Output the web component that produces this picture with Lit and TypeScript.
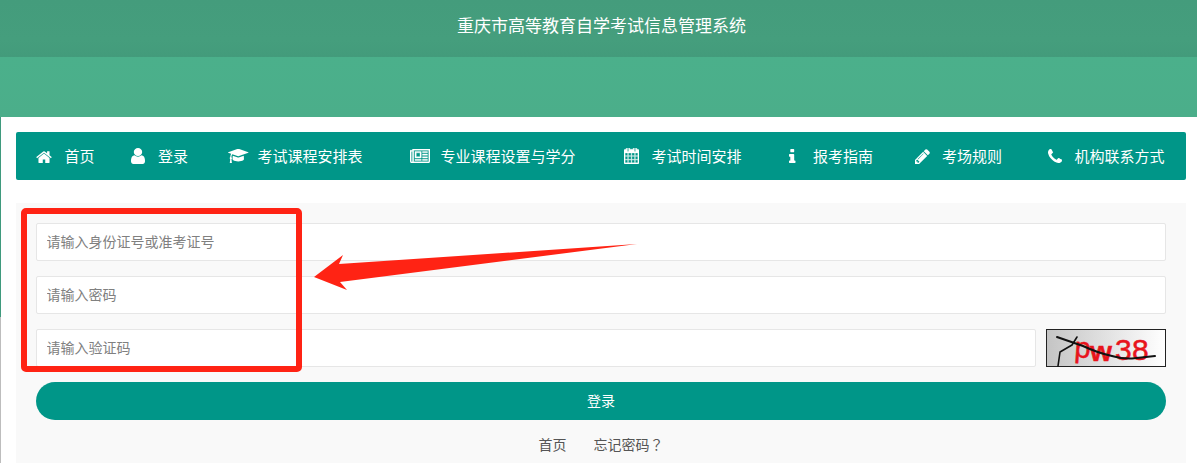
import { LitElement, html, css, svg } from "lit";
import { customElement } from "lit/decorators.js";

const ICONS: Record<string, { vb: string; d: string; rule?: string; bold?: boolean }> = {
  home: { vb: "64 128 1664 1408", d: "M1472 992v480q0 26-19 45t-45 19h-384v-384h-256v384h-384q-26 0-45-19t-19-45v-480q0-1 .5-3t.5-3l575-474 575 474q1 2 1 6zm223-69l-62 74q-8 9-21 11h-3q-13 0-21-7l-692-577-692 577q-12 8-24 7-13-2-21-11l-62-74q-8-10-7-23.500t11-21.500l719-599q32-26 76-26t76 26l244 204v-195q0-14 9-23t23-9h192q14 0 23 9t9 23v408l219 182q10 8 11 21.500t-7 23.500z" },
  user: { vb: "256 128 1280 1536", d: "M1536 1399q0 109-62.500 187t-150.500 78h-854q-88 0-150.500-78t-62.500-187q0-85 8.500-160.500t31.500-152 58.500-131 94-89 134.500-34.500q131 128 313 128t313-128q76 0 134.500 34.500t94 89 58.500 131 31.500 152 8.500 160.500zm-256-887q0 159-112.500 271.500t-271.500 112.500-271.500-112.500-112.500-271.500 112.500-271.500 271.500-112.500 271.500 112.500 112.500 271.500z" },
  cap: { vb: "0 160 2304 1408", d: "M1774 836l18 316q4 69-82 128t-235 93.500-323 34.500-323-34.500-235-93.500-82-128l18-316 574 181q22 7 48 7t48-7zm530-324q0 23-22 31l-1120 352q-4 1-10 1t-10-1l-652-206q-43 34-71 111.500t-34 178.500q63 36 63 109 0 69-58 107l58 433q2 14-8 25-9 11-24 11h-192q-15 0-24-11-10-11-8-25l58-433q-58-38-58-107 0-73 65-111 11-207 98-330l-333-104q-22-8-22-31t22-31l1120-352q4-1 10-1t10 1l1120 352q22 8 22 31z" },
  news: { vb: "0 256 2048 1408", rule: "evenodd", bold: true, d: "M256 256h1792v1216q0 80-56 136t-136 56H192q-80 0-136-56T0 1472V384h256zM384 384v1088q0 30-11 64h1483q26 0 45-19t19-45V384zM128 512v960q0 26 19 45t45 19 45-19 19-45V512zM512 512h640v640H512zM640 640v384h384V640zM1280 512h512v128h-512zM1280 768h512v128h-512zM1280 1024h512v128h-512zM1280 1280h512v128h-512zM512 1280h640v128H512z" },
  calendar: { vb: "0 128 1664 1664", bold: true, d: "M128 1664h288v-288h-288v288zm352 0h320v-288h-320v288zm-352-352h288v-320h-288v320zm352 0h320v-320h-320v320zm-352-384h288v-288h-288v288zm736 736h320v-288h-320v288zm-384-736h320v-288h-320v288zm768 736h288v-288h-288v288zm-384-352h320v-320h-320v320zm-352-864v-288q0-13-9.500-22.500t-22.500-9.500h-64q-13 0-22.500 9.500t-9.500 22.500v288q0 13 9.500 22.500t22.500 9.500h64q13 0 22.500-9.500t9.500-22.500zm736 864h288v-320h-288v320zm-384-384h320v-288h-320v288zm384 0h288v-288h-288v288zm32-480v-288q0-13-9.500-22.500t-22.500-9.500h-64q-13 0-22.500 9.500t-9.500 22.500v288q0 13 9.500 22.500t22.500 9.500h64q13 0 22.500-9.500t9.500-22.500zm384-64v1280q0 52-38 90t-90 38h-1408q-52 0-90-38t-38-90v-1280q0-52 38-90t90-38h128v-96q0-66 47-113t113-47h64q66 0 113 47t47 113v96h384v-96q0-66 47-113t113-47h64q66 0 113 47t47 113v96h128q52 0 90 38t38 90z" },
  info: { vb: "576 128 640 1408", d: "M1216 1344v128q0 26-19 45t-45 19h-512q-26 0-45-19t-19-45v-128q0-26 19-45t45-19h64v-384h-64q-26 0-45-19t-19-45v-128q0-26 19-45t45-19h384q26 0 45 19t19 45v576h64q26 0 45 19t19 45zm-128-1152v192q0 26-19 45t-45 19h-256q-26 0-45-19t-19-45v-192q0-26 19-45t45-19h256q26 0 45 19t19 45z" },
  pencil: { vb: "128 128 1536 1536", d: "M491 1536l91-91-235-235-91 91v107h128v128h107zm523-928q0-22-22-22-10 0-17 7l-542 542q-7 7-7 17 0 22 22 22 10 0 17-7l542-542q7-7 7-17zm-54-192l416 416-832 832h-416v-416zm683 96q0 53-37 90l-166 166-416-416 166-165q36-38 90-38 53 0 91 38l235 234q37 39 37 91z" },
  phone: { vb: "192 128 1408 1408", d: "M1600 1240q0 27-10 70.500t-21 68.500q-21 50-122 106-94 51-186 51-27 0-53-3.500t-57.500-12.500-47-14.500-55.500-20.500-49-18q-98-35-175-83-127-79-264-216t-216-264q-48-77-83-175-3-9-18-49t-20.500-55.500-14.500-47-12.500-57.500-3.500-53q0-92 51-186 56-101 106-122 25-11 68.500-21t70.500-10q14 0 21 3 18 6 53 76 11 19 30 54t35 63.500 31 53.500q3 4 17.500 25t21.500 35.500 7 28.500q0 20-28.500 50t-62 55-62 53-28.500 46q0 9 5 22.500t8.500 20.500 14 24 11.500 19q76 137 174 235t235 174q2 1 19 11.500t24 14 20.500 8.500 22.500 5q18 0 46-28.500t53-62 55-62 50-28.500q14 0 28.500 7t35.500 21.500 25 17.500q25 15 53.500 31t63.500 35 54 30q70 35 76 53 3 7 3 21z" },
};

const NAV = [
  { icon: "home", w: 16, h: 13, to: 28.5, label: "首页" },
  { icon: "user", w: 14, h: 16, to: 27, label: "登录" },
  { icon: "cap", w: 20.5, h: 14, to: 29.5, label: "考试课程安排表" },
  { icon: "news", w: 20, h: 14, to: 30.5, label: "专业课程设置与学分" },
  { icon: "calendar", w: 15, h: 16, to: 27.5, label: "考试时间安排" },
  { icon: "info", w: 6.5, h: 14, to: 24, label: "报考指南" },
  { icon: "pencil", w: 15, h: 15, to: 27, label: "考场规则" },
  { icon: "phone", w: 14, h: 14, to: 26.5, label: "机构联系方式" },
];

@customElement("app-root")
export class AppRoot extends LitElement {
  static styles = css`
    :host {
      display: block;
      position: relative;
      width: 1197px;
      height: 463px;
      overflow: hidden;
      background: #fff;
      font-family: "Noto Sans CJK SC", "Liberation Sans", sans-serif;
    }
    .title {
      height: 57px;
      background: linear-gradient(#449c7c, #459e7d 70%, #439b7b);
      color: #fff;
      font-size: 17px;
      line-height: 50px;
      text-align: center;
      padding-left: 6px;
    }
    .band {
      height: 60px;
      background: linear-gradient(#4bb08b, #4bae8a);
    }
    .main {
      padding: 15px 11px 0 16px;
      background: linear-gradient(#3f9a7d 0 200px, #bdbdbd 200px) left top / 1px 100% no-repeat;
    }
    .nav {
      display: grid;
      grid-template-columns: 95px 97px 182px 214px 165px 126px 133px 1fr;
      align-items: center;
      height: 48px;
      padding-left: 20px;
      box-sizing: border-box;
      background: #009688;
      border-radius: 2px;
      color: #fff;
      font-size: 15px;
    }
    .item {
      display: flex;
      align-items: center;
      white-space: nowrap;
    }
    .label {
      padding-bottom: 2px;
    }
    .icon {
      flex: none;
      display: flex;
      align-items: center;
    }
    .icon svg {
      display: block;
      fill: #fff;
    }
    .icon .bold {
      stroke: #fff;
      stroke-width: 36;
    }
    .card {
      margin-top: 23px;
      padding: 20px 20px 0;
      height: 300px;
      box-sizing: border-box;
      background: #f9f9f9;
      display: flex;
      flex-direction: column;
      gap: 15px;
    }
    .field {
      height: 38px;
      flex: none;
      box-sizing: border-box;
      border: 1px solid #e6e6e6;
      border-radius: 2px;
      background: #fff;
      padding: 0 10px 2px 9.5px;
      font: inherit;
      font-size: 14px;
      color: #333;
      outline: none;
      width: 100%;
      min-width: 0;
    }
    .field::placeholder {
      color: #808080;
      opacity: 1;
    }
    .row {
      display: flex;
      gap: 10px;
    }
    .row .field {
      flex: 1 1 0;
      width: auto;
    }
    .captcha {
      flex: none;
      display: block;
      width: 120px;
      height: 38px;
    }
    .captcha-text {
      fill: #e8141c;
      stroke: #e8141c;
      stroke-width: 0.5px;
      font-family: "Liberation Sans", sans-serif;
    }
    .captcha-line {
      fill: none;
      stroke: #111;
      stroke-linecap: round;
      stroke-linejoin: round;
    }
    .submit {
      height: 38px;
      flex: none;
      border: 0;
      border-radius: 19px;
      background: #009688;
      color: #fff;
      font: inherit;
      font-size: 14px;
      padding: 0 0 2px;
    }
    .links {
      display: flex;
      justify-content: center;
      gap: 27px;
      margin-top: -1px;
      font-size: 14px;
      line-height: 20px;
      color: #555;
    }
    .links a {
      color: inherit;
      text-decoration: none;
    }
    .q {
      font-family: "Noto Sans CJK TC", sans-serif;
    }
    .redbox {
      position: absolute;
      left: 21px;
      top: 208px;
      width: 281px;
      height: 164px;
      box-sizing: border-box;
      border: 6px solid #ff2314;
      border-radius: 5px;
      pointer-events: none;
    }
    .arrow {
      position: absolute;
      left: 310px;
      top: 240px;
      width: 330px;
      height: 54px;
      pointer-events: none;
    }
  `;

  private icon(name: string, w: number, h: number, to: number) {
    const i = ICONS[name];
    return html`<span class="icon" style="width:${to}px"
      ><svg width=${w} height=${h} viewBox=${i.vb} preserveAspectRatio="none">
        ${svg`<path class=${i.bold ? "bold" : ""} d=${i.d} fill-rule=${i.rule ?? "nonzero"}></path>`}
      </svg></span
    >`;
  }

  private captcha() {
    return html`<svg class="captcha" viewBox="0 0 120 38">
      <defs>
        <linearGradient id="cg" x1="0" x2="1" y1="0" y2="0">
          <stop offset="0" stop-color="#c4c4c4"></stop>
          <stop offset="1" stop-color="#ffffff"></stop>
        </linearGradient>
      </defs>
      <rect x="0.5" y="0.5" width="119" height="37" fill="url(#cg)" stroke="#222"></rect>
      <g class="captcha-text">
        <text x="28" y="28" font-size="29" transform="rotate(4 28 28)">p</text>
        <text x="44" y="32" font-size="28" font-weight="bold" textLength="22" lengthAdjust="spacingAndGlyphs">w</text>
        <text x="69" y="31" font-size="30">3</text>
        <text x="86" y="31" font-size="30">8</text>
      </g>
      <path class="captcha-line" stroke-width="2" d="M11 8 L37 17 Q52 24 66 27 Q76 30 86 29.500 L109 27"></path>
      <path class="captcha-line" stroke-width="1.6" d="M12 37 L14 23 L26 16 L31 8"></path>
    </svg>`;
  }

  render() {
    return html`
      <div class="title">重庆市高等教育自学考试信息管理系统</div>
      <div class="band"></div>
      <div class="main">
        <nav class="nav">
          ${NAV.map(
            (n) => html`<div class="item">${this.icon(n.icon, n.w, n.h, n.to)}<span class="label">${n.label}</span></div>`
          )}
        </nav>
        <form class="card">
          <input class="field" placeholder="请输入身份证号或准考证号" />
          <input class="field" placeholder="请输入密码" />
          <div class="row">
            <input class="field" placeholder="请输入验证码" />
            ${this.captcha()}
          </div>
          <button class="submit" type="button">登录</button>
          <div class="links"><a href="#">首页</a><a href="#">忘记密码<span class="q">？</span></a></div>
        </form>
      </div>
      <div class="redbox"></div>
      <svg class="arrow" viewBox="310 240 330 54">
        <polygon fill="#ff2314" points="314,277 343,255 339,264 637,244 340,282 347,290"></polygon>
      </svg>
    `;
  }
}
